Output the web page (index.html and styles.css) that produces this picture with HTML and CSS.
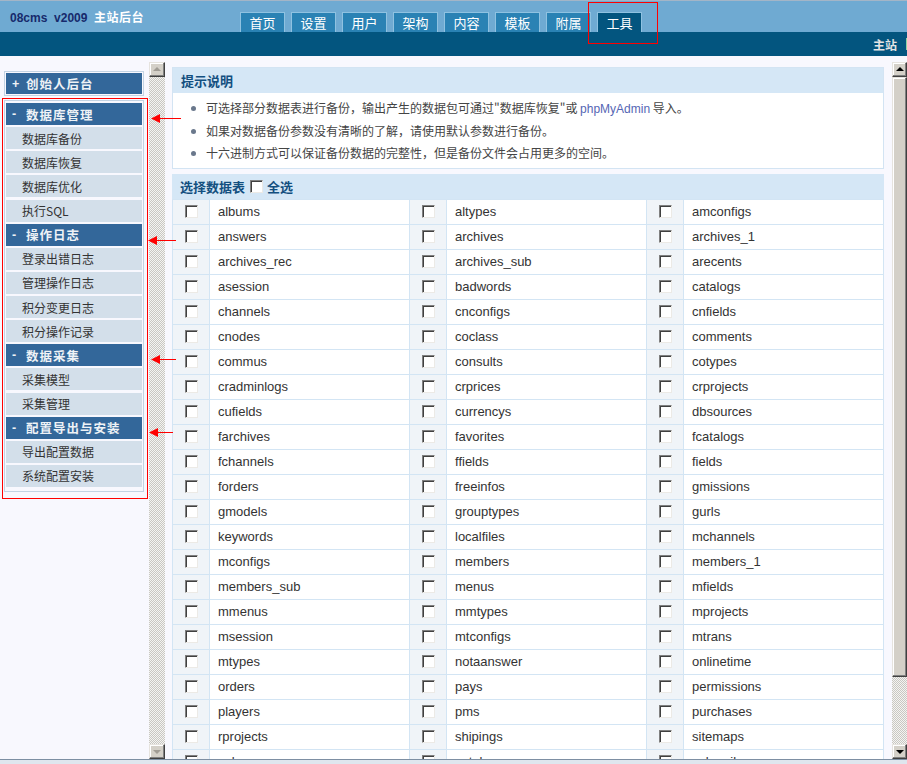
FILE: index.html
```html
<!DOCTYPE html>
<html lang="zh-CN">
<head>
<meta charset="utf-8">
<title>08cms v2009 主站后台</title>
<link rel="stylesheet" href="styles.css">
</head>
<body>
<div class="page">
  <header class="topbar">
    <div class="brand"><span class="ver">08cms&nbsp; v2009</span>&nbsp; <span class="site">主站后台</span></div>
    <nav class="tabs">
      <a class="tab">首页</a>
      <a class="tab">设置</a>
      <a class="tab">用户</a>
      <a class="tab">架构</a>
      <a class="tab">内容</a>
      <a class="tab">模板</a>
      <a class="tab">附属</a>
      <a class="tab active">工具</a>
    </nav>
  </header>
  <div class="subbar"><span class="home">主站</span><span class="edge"></span></div>
  <div class="frames">
    <aside class="leftframe">
      <div class="menu">
        <div class="creator"><div class="sec"><span class="sign">+</span>创始人后台</div></div>
        <div class="group">
          <div class="sec"><span class="sign">-</span>数据库管理</div>
          <div class="item">数据库备份</div>
          <div class="item">数据库恢复</div>
          <div class="item">数据库优化</div>
          <div class="item">执行SQL</div>
          <div class="sec"><span class="sign">-</span>操作日志</div>
          <div class="item">登录出错日志</div>
          <div class="item">管理操作日志</div>
          <div class="item">积分变更日志</div>
          <div class="item">积分操作记录</div>
          <div class="sec"><span class="sign">-</span>数据采集</div>
          <div class="item">采集模型</div>
          <div class="item">采集管理</div>
          <div class="sec"><span class="sign">-</span>配置导出与安装</div>
          <div class="item">导出配置数据</div>
          <div class="item">系统配置安装</div>
        </div>
      </div>
      <div class="vscroll off">
        <div class="sbtn up"></div>
        <div class="track"></div>
        <div class="sbtn down"></div>
      </div>
    </aside>
    <main class="mainframe">
      <div class="content">
        <section class="tips">
          <h3 class="box-title">提示说明</h3>
          <ul class="tip-list">
            <li>可选择部分数据表进行备份，输出产生的数据包可通过"数据库恢复"或 <span class="pma">phpMyAdmin</span> 导入。</li>
            <li>如果对数据备份参数没有清晰的了解，请使用默认参数进行备份。</li>
            <li>十六进制方式可以保证备份数据的完整性，但是备份文件会占用更多的空间。</li>
          </ul>
        </section>
        <div class="tbl-head">选择数据表 <span class="cb"></span> 全选</div>
        <table class="tbl">
          <colgroup><col class="c-cb"><col class="c-nm"><col class="c-cb"><col class="c-nm"><col class="c-cb"><col class="c-nm"></colgroup>
          <tr><td class="k"><span class="cb"></span></td><td>albums</td><td class="k"><span class="cb"></span></td><td>altypes</td><td class="k"><span class="cb"></span></td><td>amconfigs</td></tr>
          <tr><td class="k"><span class="cb"></span></td><td>answers</td><td class="k"><span class="cb"></span></td><td>archives</td><td class="k"><span class="cb"></span></td><td>archives_1</td></tr>
          <tr><td class="k"><span class="cb"></span></td><td>archives_rec</td><td class="k"><span class="cb"></span></td><td>archives_sub</td><td class="k"><span class="cb"></span></td><td>arecents</td></tr>
          <tr><td class="k"><span class="cb"></span></td><td>asession</td><td class="k"><span class="cb"></span></td><td>badwords</td><td class="k"><span class="cb"></span></td><td>catalogs</td></tr>
          <tr><td class="k"><span class="cb"></span></td><td>channels</td><td class="k"><span class="cb"></span></td><td>cnconfigs</td><td class="k"><span class="cb"></span></td><td>cnfields</td></tr>
          <tr><td class="k"><span class="cb"></span></td><td>cnodes</td><td class="k"><span class="cb"></span></td><td>coclass</td><td class="k"><span class="cb"></span></td><td>comments</td></tr>
          <tr><td class="k"><span class="cb"></span></td><td>commus</td><td class="k"><span class="cb"></span></td><td>consults</td><td class="k"><span class="cb"></span></td><td>cotypes</td></tr>
          <tr><td class="k"><span class="cb"></span></td><td>cradminlogs</td><td class="k"><span class="cb"></span></td><td>crprices</td><td class="k"><span class="cb"></span></td><td>crprojects</td></tr>
          <tr><td class="k"><span class="cb"></span></td><td>cufields</td><td class="k"><span class="cb"></span></td><td>currencys</td><td class="k"><span class="cb"></span></td><td>dbsources</td></tr>
          <tr><td class="k"><span class="cb"></span></td><td>farchives</td><td class="k"><span class="cb"></span></td><td>favorites</td><td class="k"><span class="cb"></span></td><td>fcatalogs</td></tr>
          <tr><td class="k"><span class="cb"></span></td><td>fchannels</td><td class="k"><span class="cb"></span></td><td>ffields</td><td class="k"><span class="cb"></span></td><td>fields</td></tr>
          <tr><td class="k"><span class="cb"></span></td><td>forders</td><td class="k"><span class="cb"></span></td><td>freeinfos</td><td class="k"><span class="cb"></span></td><td>gmissions</td></tr>
          <tr><td class="k"><span class="cb"></span></td><td>gmodels</td><td class="k"><span class="cb"></span></td><td>grouptypes</td><td class="k"><span class="cb"></span></td><td>gurls</td></tr>
          <tr><td class="k"><span class="cb"></span></td><td>keywords</td><td class="k"><span class="cb"></span></td><td>localfiles</td><td class="k"><span class="cb"></span></td><td>mchannels</td></tr>
          <tr><td class="k"><span class="cb"></span></td><td>mconfigs</td><td class="k"><span class="cb"></span></td><td>members</td><td class="k"><span class="cb"></span></td><td>members_1</td></tr>
          <tr><td class="k"><span class="cb"></span></td><td>members_sub</td><td class="k"><span class="cb"></span></td><td>menus</td><td class="k"><span class="cb"></span></td><td>mfields</td></tr>
          <tr><td class="k"><span class="cb"></span></td><td>mmenus</td><td class="k"><span class="cb"></span></td><td>mmtypes</td><td class="k"><span class="cb"></span></td><td>mprojects</td></tr>
          <tr><td class="k"><span class="cb"></span></td><td>msession</td><td class="k"><span class="cb"></span></td><td>mtconfigs</td><td class="k"><span class="cb"></span></td><td>mtrans</td></tr>
          <tr><td class="k"><span class="cb"></span></td><td>mtypes</td><td class="k"><span class="cb"></span></td><td>notaanswer</td><td class="k"><span class="cb"></span></td><td>onlinetime</td></tr>
          <tr><td class="k"><span class="cb"></span></td><td>orders</td><td class="k"><span class="cb"></span></td><td>pays</td><td class="k"><span class="cb"></span></td><td>permissions</td></tr>
          <tr><td class="k"><span class="cb"></span></td><td>players</td><td class="k"><span class="cb"></span></td><td>pms</td><td class="k"><span class="cb"></span></td><td>purchases</td></tr>
          <tr><td class="k"><span class="cb"></span></td><td>rprojects</td><td class="k"><span class="cb"></span></td><td>shipings</td><td class="k"><span class="cb"></span></td><td>sitemaps</td></tr>
          <tr><td class="k"><span class="cb"></span></td><td>splangs</td><td class="k"><span class="cb"></span></td><td>sptpls</td><td class="k"><span class="cb"></span></td><td>subscribes</td></tr>
        </table>
      </div>
      <div class="vscroll main">
        <div class="sbtn up"></div>
        <div class="thumb"></div>
        <div class="track"></div>
        <div class="sbtn down"></div>
      </div>
    </main>
  </div>
  <div class="footer"></div>

  <div class="mark mark-tab"></div>
  <div class="mark mark-menu"></div>
  <svg class="arrows" width="907" height="764" viewBox="0 0 907 764">
    <g fill="#ff0000" stroke="#ff0000">
      <line x1="159" y1="118.5" x2="181" y2="118.5" stroke-width="1"/>
      <polygon points="151,118.5 160,114 160,123" stroke="none"/>
      <line x1="156" y1="240.5" x2="176" y2="240.5" stroke-width="1"/>
      <polygon points="148,240.5 157,236 157,245" stroke="none"/>
      <line x1="159" y1="359.5" x2="176" y2="359.5" stroke-width="1"/>
      <polygon points="151,359.5 160,355 160,364" stroke="none"/>
      <line x1="157" y1="432.5" x2="173" y2="432.5" stroke-width="1"/>
      <polygon points="149,432.5 158,428 158,437" stroke="none"/>
    </g>
  </svg>
</div>
</body>
</html>
```

FILE: styles.css
```css
* { box-sizing: border-box; }
html, body { margin: 0; padding: 0; }
body {
  font-family: "Liberation Sans", "Noto Sans CJK SC", sans-serif;
  font-size: 12px;
  color: #333;
}
.page {
  position: relative;
  width: 907px;
  height: 764px;
  overflow: hidden;
  background: #f8f8fe;
}

/* ---------- header ---------- */
.topbar {
  height: 32px;
  border-top: 1px solid #a3b5c7;
  background: #6faad2;
  display: flex;
  align-items: flex-end;
}
.brand {
  width: 240px;
  align-self: center;
  padding-left: 10px;
  font-weight: bold;
  font-size: 12px;
  white-space: nowrap;
}
.brand .ver { color: #172a6c; }
.brand .site { color: #fff; font-family: "Noto Sans CJK SC", sans-serif; letter-spacing: 0.5px; }
.tabs { display: flex; gap: 6px; }
.tab {
  width: 45px;
  height: 20px;
  border: 1px solid #8fc2e1;
  border-bottom: 0;
  background: #2a82b4;
  color: #fff;
  font-family: "Noto Sans CJK SC", sans-serif;
  font-size: 13px;
  display: flex;
  align-items: center;
  justify-content: center;
}
.tab.active { background: #03557f; }

.subbar {
  height: 24px;
  background: #03557f;
  display: flex;
  justify-content: flex-end;
  align-items: center;
}
.home {
  color: #e4e4e4;
  font-family: "Noto Sans CJK SC", sans-serif;
  font-weight: bold;
  font-size: 12px;
  margin-right: 9px;
}
.edge { width: 1px; height: 12px; background: #8fd2a6; }

/* ---------- frames ---------- */
.frames {
  display: flex;
  height: 703px;
  padding-top: 6px;
}
.leftframe { width: 165px; display: flex; }
.menu { width: 149px; padding-top: 9px; }

.creator {
  margin-left: 4px;
  width: 140px;
  border: 1px solid #c3d3e3;
  padding: 1px;
}
.creator .sec { margin: 0; height: 21px; }

.group {
  margin: 4px 0 0 4px;
  width: 140px;
  border: 1px solid #c3d3e3;
  padding: 2px 1px 2px;
}
.sec, .item {
  height: 22px;
  margin-bottom: 2.14px;
  display: flex;
  align-items: center;
  font-family: "Noto Sans CJK SC", sans-serif;
  font-size: 12px;
}
.sec {
  background: #33679a;
  color: #eef2f6;
  font-weight: bold;
  font-size: 12.5px;
  letter-spacing: 1px;
  padding-left: 6px;
}
.sign { width: 14px; font-family: "Liberation Sans", sans-serif; font-weight: bold; }
.item {
  background: #d3dfea;
  color: #333;
  padding-left: 16px;
}

/* ---------- scrollbars ---------- */
.vscroll {
  width: 16px;
  display: flex;
  flex-direction: column;
}
.vscroll.main { width: 15px; }
.sbtn {
  height: 15px;
  flex: none;
  background: #d4d0c8;
  border: 1px solid;
  border-color: #e6e3de #404040 #404040 #e6e3de;
  box-shadow: inset -1px -1px #808080, inset 1px 1px #fff;
  display: flex;
  align-items: center;
  justify-content: center;
}
.sbtn::after {
  content: "";
  width: 0;
  height: 0;
  border-left: 4px solid transparent;
  border-right: 4px solid transparent;
}
.sbtn.up::after { border-bottom: 4px solid #000; margin-top: -1px; }
.sbtn.down::after { border-top: 4px solid #000; margin-top: 1px; }
.off .sbtn.up::after { border-bottom-color: #a09c94; }
.off .sbtn.down::after { border-top-color: #a09c94; }
.track {
  flex: 1;
  background: repeating-conic-gradient(#c9c7c2 0 25%, #f4f4f2 0 50%) 0 0 / 2px 2px;
}
.thumb {
  height: 600px;
  flex: none;
  background: #d4d0c8;
  border: 1px solid;
  border-color: #e6e3de #404040 #404040 #e6e3de;
  box-shadow: inset -1px -1px #808080, inset 1px 1px #fff;
}

/* ---------- main ---------- */
.mainframe { flex: 1; display: flex; min-width: 0; }
.content {
  flex: 1;
  padding: 5px 8px 0 7px;
  overflow: hidden;
}
.tips {
  width: 712px;
  border: 1px solid #d3e4f3;
  background: #fff;
}
.box-title {
  margin: 0;
  height: 25px;
  background: #d5e7f6;
  color: #134f7f;
  font-family: "Noto Sans CJK SC", sans-serif;
  font-size: 13px;
  font-weight: bold;
  padding-left: 8px;
  display: flex;
  align-items: center;
}
.tip-list {
  list-style: none;
  margin: 0;
  padding: 4px 0 3px 0;
}
.tip-list li {
  height: 22.5px;
  line-height: 22.5px;
  padding-left: 33px;
  position: relative;
  color: #444;
  font-family: "Noto Sans CJK SC", sans-serif;
  font-size: 12px;
}
.tip-list li::before {
  content: "";
  position: absolute;
  left: 18px;
  top: 9px;
  width: 5px;
  height: 5px;
  border-radius: 50%;
  background: #6a788c;
}
.pma { font-family: "Liberation Sans", sans-serif; color: #5566b4; }

.tbl-head {
  margin-top: 5px;
  width: 712px;
  height: 25px;
  background: #d5e7f6;
  color: #134f7f;
  font-family: "Noto Sans CJK SC", sans-serif;
  font-size: 13px;
  font-weight: bold;
  padding-left: 8px;
  display: flex;
  align-items: center;
  gap: 4px;
}
.tbl-head .cb { margin: 0 0 0 1px; }

.cb {
  display: inline-block;
  width: 13px;
  height: 13px;
  background: #fff;
  border: 1px solid;
  border-color: #808080 #eceae6 #eceae6 #808080;
  box-shadow: inset 1px 1px #404040;
  vertical-align: middle;
}
.tbl {
  width: 712px;
  table-layout: fixed;
  border-collapse: collapse;
  font-size: 13px;
}
.c-cb { width: 37px; }
.c-nm { width: 200px; }
.tbl td {
  height: 25px;
  border: 1px solid #d3e5f4;
  padding: 0 0 0 8px;
  background: #fff;
  color: #333;
  white-space: nowrap;
}
.tbl td.k {
  background: #f0f4f8;
  padding: 0;
  text-align: center;
  line-height: 0;
}

/* ---------- footer ---------- */
.footer {
  height: 5px;
  border-top: 1px solid #7d8fa3;
  background: #dfe6ee;
}

/* ---------- annotations ---------- */
.mark {
  position: absolute;
  border: 1px solid #ff0000;
  pointer-events: none;
}
.mark-tab { left: 588px; top: 2px; width: 70px; height: 42px; }
.mark-menu { left: 2px; top: 98px; width: 146px; height: 401px; }
.arrows { position: absolute; left: 0; top: 0; pointer-events: none; }
```
